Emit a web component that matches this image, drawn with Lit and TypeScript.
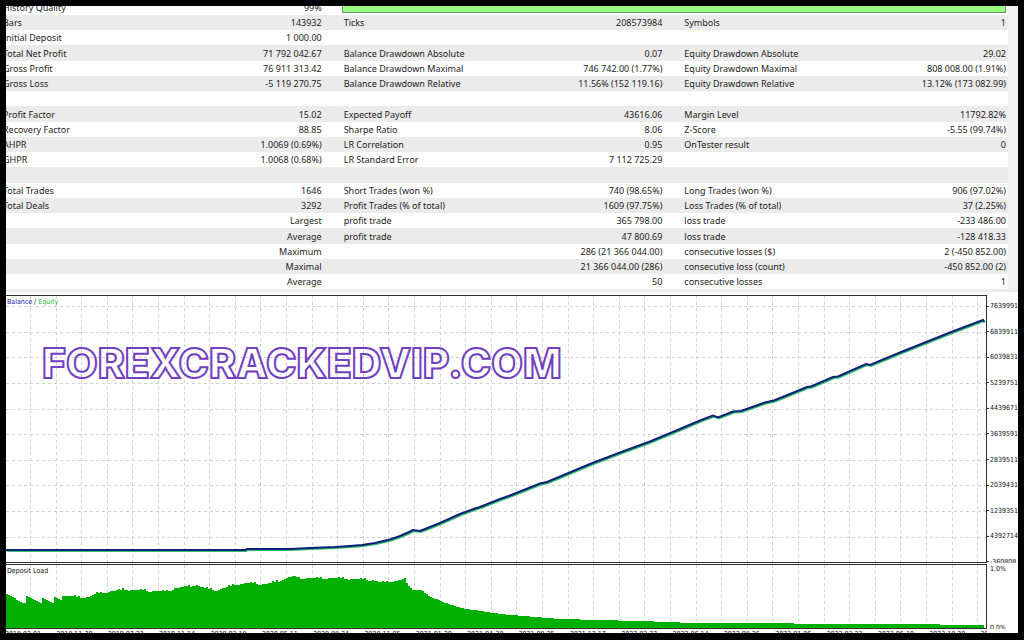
import { LitElement, html, svg, css } from "lit";
import { customElement } from "lit/decorators.js";

type Row = [string, string, string, string, string, string];

const ROWS: Row[] = [
  ["Bars", "143932", "Ticks", "208573984", "Symbols", "1"],
  ["Initial Deposit", "1 000.00", "", "", "", ""],
  ["Total Net Profit", "71 792 042.67", "Balance Drawdown Absolute", "0.07", "Equity Drawdown Absolute", "29.02"],
  ["Gross Profit", "76 911 313.42", "Balance Drawdown Maximal", "746 742.00 (1.77%)", "Equity Drawdown Maximal", "808 008.00 (1.91%)"],
  ["Gross Loss", "-5 119 270.75", "Balance Drawdown Relative", "11.56% (152 119.16)", "Equity Drawdown Relative", "13.12% (173 082.99)"],
  ["", "", "", "", "", ""],
  ["Profit Factor", "15.02", "Expected Payoff", "43616.06", "Margin Level", "11792.82%"],
  ["Recovery Factor", "88.85", "Sharpe Ratio", "8.06", "Z-Score", "-5.55 (99.74%)"],
  ["AHPR", "1.0069 (0.69%)", "LR Correlation", "0.95", "OnTester result", "0"],
  ["GHPR", "1.0068 (0.68%)", "LR Standard Error", "7 112 725.29", "", ""],
  ["", "", "", "", "", ""],
  ["Total Trades", "1646", "Short Trades (won %)", "740 (98.65%)", "Long Trades (won %)", "906 (97.02%)"],
  ["Total Deals", "3292", "Profit Trades (% of total)", "1609 (97.75%)", "Loss Trades (% of total)", "37 (2.25%)"],
  ["", "Largest", "profit trade", "365 798.00", "loss trade", "-233 486.00"],
  ["", "Average", "profit trade", "47 800.69", "loss trade", "-128 418.33"],
  ["", "Maximum", "", "286 (21 366 044.00)", "consecutive losses ($)", "2 (-450 852.00)"],
  ["", "Maximal", "", "21 366 044.00 (286)", "consecutive loss (count)", "-450 852.00 (2)"],
  ["", "Average", "", "50", "consecutive losses", "1"],
];

const LEVELS = ["7639991", "6839911", "6039831", "5239751", "4439671", "3639591", "2839511", "2039431", "1239351", "4392714", "-360808"];

const DATES = [
  "2018.03.01", "2018.11.20", "2019.07.23", "2019.11.14", "2020.03.18", "2020.05.11", "2020.08.24",
  "2020.11.05", "2021.01.20", "2021.04.30", "2021.08.25", "2021.12.17", "2022.03.22", "2022.06.14",
  "2022.08.26", "2023.01.06", "2023.03.23", "2023.06.19", "2023.10.20", "202",
];

const BALANCE =
  "0,255 239,255 241,254 284,254 304,253 329,252 344,251 356,250 369,248 384,244.5 394,241 402,237.5 407,235 " +
  "414,236 419,234 434,228 454,219 469,213.5 474,212 494,204 504,200.5 534,188.5 541,187 559,179.5 584,169 " +
  "614,157.5 644,146.5 674,134 694,125.5 707,120.5 712,122.5 727,116.5 735,116 759,107.5 768,105.5 784,99 " +
  "801,92 805,91.5 827,82 832,81.5 860,69 864,70 894,57.5 919,47.5 944,37.5 977,25 978,26.5";

/* Load profile: x, y of the upper edge, in plot units. */
const LOAD: [number, number][] = [
  [0, 31], [6, 34], [12, 38], [20, 41], [20, 33], [28, 37], [36, 41], [36, 35], [46, 40], [47, 33], [55, 38], [55, 33],
  [82, 34], [89, 30], [99, 29], [119, 26], [124, 27], [159, 28], [169, 25], [189, 22], [199, 25], [211, 27],
  [229, 21], [244, 20], [259, 21], [274, 17], [286, 13], [294, 15], [324, 15], [359, 16], [374, 19], [389, 18],
  [398, 16], [401, 22], [406, 27], [414, 27], [424, 34], [439, 40], [454, 45], [474, 48], [494, 51], [504, 52],
  [554, 56], [594, 57], [664, 59], [684, 60], [889, 61], [978, 62],
];

function loadArea(): string {
  let d = "M0 66";
  let seg = 0;
  for (let x = 0; x < 978; x += 2) {
    while (seg < LOAD.length - 2 && LOAD[seg + 1][0] <= x) seg++;
    const [x0, y0] = LOAD[seg];
    const [x1, y1] = LOAD[seg + 1];
    const base = y0 + ((x - x0) / (x1 - x0)) * (y1 - y0);
    const jag = x > 56 && x < 400 ? [0, 1, 0, -1, 1, 0, 0, 1, 0, -1, 0][(x * 7) % 11] : 0;
    const y = Math.round(base + jag);
    d += `V${y}H${x + 2}`;
  }
  return d + "V66Z";
}

const columns = Array.from({ length: 38 }, (_, i) => Math.round(24 + i * 25.6) + 0.5);
const lines = Array.from({ length: 10 }, (_, i) => Math.round(11 + i * 25.63) + 0.5);

@customElement("report-table")
class ReportTable extends LitElement {
  static styles = css`
    :host { display: block; margin: -6px 10px 0 -5px; }
    table {
      width: 100%; border-collapse: collapse; table-layout: fixed;
      font: 9px/15px "Noto Sans", "Open Sans", sans-serif; color: #1c1c1c; white-space: nowrap;
    }
    .label { width: 18%; }
    .value { width: 15.9%; }
    .last { width: 14.4%; }
    td, th { height: 15px; padding: 0 0 0 2px; font-weight: 400; text-align: left; }
    tr:nth-child(4n) > * { height: 16px; }
    tr:nth-child(even) { background: #ebebeb; }
    td { text-align: right; padding: 0 20px 0 0; }
    td:last-child { padding-right: 2px; }
    .quality { padding: 0; vertical-align: top; }
    .bar {
      height: 12px; border: 1px solid #6f9463; border-top: 0;
      background: #98fb82;
    }
  `;
  render() {
    return html`
      <table>
        <colgroup>
          <col class="label" /><col class="value" /><col class="label" /><col class="value" /><col class="label" /><col class="last" />
        </colgroup>
        <tbody>
          <tr>
            <th scope="row">History Quality</th>
            <td>99%</td>
            <td class="quality" colspan="4"><div class="bar"></div></td>
          </tr>
          ${ROWS.map(
            (r) => html`<tr>
              <th scope="row">${r[0]}</th><td>${r[1]}</td>
              <th scope="row">${r[2]}</th><td>${r[3]}</td>
              <th scope="row">${r[4]}</th><td>${r[5]}</td>
            </tr>`
          )}
        </tbody>
      </table>
    `;
  }
}

@customElement("balance-chart")
class BalanceChart extends LitElement {
  static styles = css`
    :host {
      display: grid; min-height: 0;
      grid-template-columns: minmax(0, 1fr) 31px;
      grid-template-rows: minmax(0, 268fr) minmax(0, 66fr) 4px;
      font: 7px/10px "DejaVu Sans Condensed", "DejaVu Sans", sans-serif; color: #111;
      overflow: hidden;
    }
    .plot { position: relative; min-height: 0; border: 1px solid #2e2e2e; border-left: 0; overflow: hidden; }
    .load { margin-top: 1px; }
    svg { display: block; width: 100%; height: 100%; }
    .grid { stroke: #d2d2d2; stroke-dasharray: 3 3; fill: none; }
    .balance { fill: none; stroke: #0a1f78; stroke-width: 2; }
    .equity { fill: none; stroke: #2fbf6a; stroke-width: 2; }
    .area { fill: #00b000; }
    .legend { position: absolute; top: 1px; left: 1px; }
    .blue { color: #1818b0; }
    .green { color: #18c030; }
    .mark {
      position: absolute; top: 42px; left: 36px;
      font: 800 41px/50px "Inter", "Liberation Sans", sans-serif;
      color: transparent; -webkit-text-stroke: 2px #6a35bd;
      white-space: nowrap; opacity: 0.95;
    }
    .axis { overflow: hidden; }
    ul { list-style: none; margin: 0; padding: 0; }
    .levels { display: flex; flex-direction: column; justify-content: space-between; height: 100%; box-sizing: border-box; }
    .axis.main { padding: 6px 0 0; margin: 0; }
    .axis.main .levels { height: calc(100% + 4px); }
    .axis li { display: flex; align-items: center; height: 10px; white-space: nowrap; }
    .axis.main li::before { content: ""; width: 2px; height: 1px; margin-right: 1px; background: #333; }
    .axis.load-axis { padding: 1px 0 0; }
    .axis.load-axis li { padding-left: 3px; }
    .load-axis .levels { height: calc(100% + 4px); }
    .dates { display: flex; grid-column: 1; overflow: hidden; margin-left: -1px; padding-top: 1px; line-height: 8px; }
    .dates li { flex: 0 0 5.23%; white-space: nowrap; }
  `;
  render() {
    return html`
      <div class="plot">
        <svg viewBox="0 0 980 266" preserveAspectRatio="none" aria-hidden="true">
          ${columns.map((x) => svg`<path class="grid" d="M${x} 0V266" />`)}
          ${lines.map((y) => svg`<path class="grid" d="M0 ${y - 1}H980" />`)}
          <polyline class="equity" points=${BALANCE} transform="translate(1 0)" />
          <polyline class="balance" points=${BALANCE} transform="translate(0 -1)" />
        </svg>
        <div class="legend"><span class="blue">Balance</span> / <span class="green">Equity</span></div>
        <div class="mark">FOREXCRACKEDVIP.COM</div>
      </div>
      <div class="axis main"><ul class="levels">${LEVELS.map((l) => html`<li>${l}</li>`)}</ul></div>
      <div class="plot load">
        <svg viewBox="0 0 980 63" preserveAspectRatio="none" aria-hidden="true">
          ${columns.map((x) => svg`<path class="grid" d="M${x} 0V63" />`)}
          <path class="area" d=${loadArea()} transform="translate(0 -2)" />
        </svg>
        <div class="legend">Deposit Load</div>
      </div>
      <div class="axis load-axis"><ul class="levels"><li>1.0%</li><li>0.0%</li></ul></div>
      <ul class="dates">${DATES.map((d) => html`<li>${d}</li>`)}</ul>
    `;
  }
}

@customElement("app-root")
class AppRoot extends LitElement {
  static styles = css`
    :host { display: block; box-sizing: border-box; height: 100vh; padding: 6px 6px 7px; background: #000; }
    .panel { display: flex; flex-direction: column; height: 100%; box-sizing: border-box; background: #fff; overflow: hidden; }
    .report { flex: none; margin-bottom: 3px; border-bottom: 3px solid #ececec; background: linear-gradient(to left, #f1f1f1 10px, #fff 10px); }
    balance-chart { flex: 1; }
  `;
  render() {
    return html`
      <main class="panel">
        <div class="report"><report-table></report-table></div>
        <balance-chart></balance-chart>
      </main>
    `;
  }
}
